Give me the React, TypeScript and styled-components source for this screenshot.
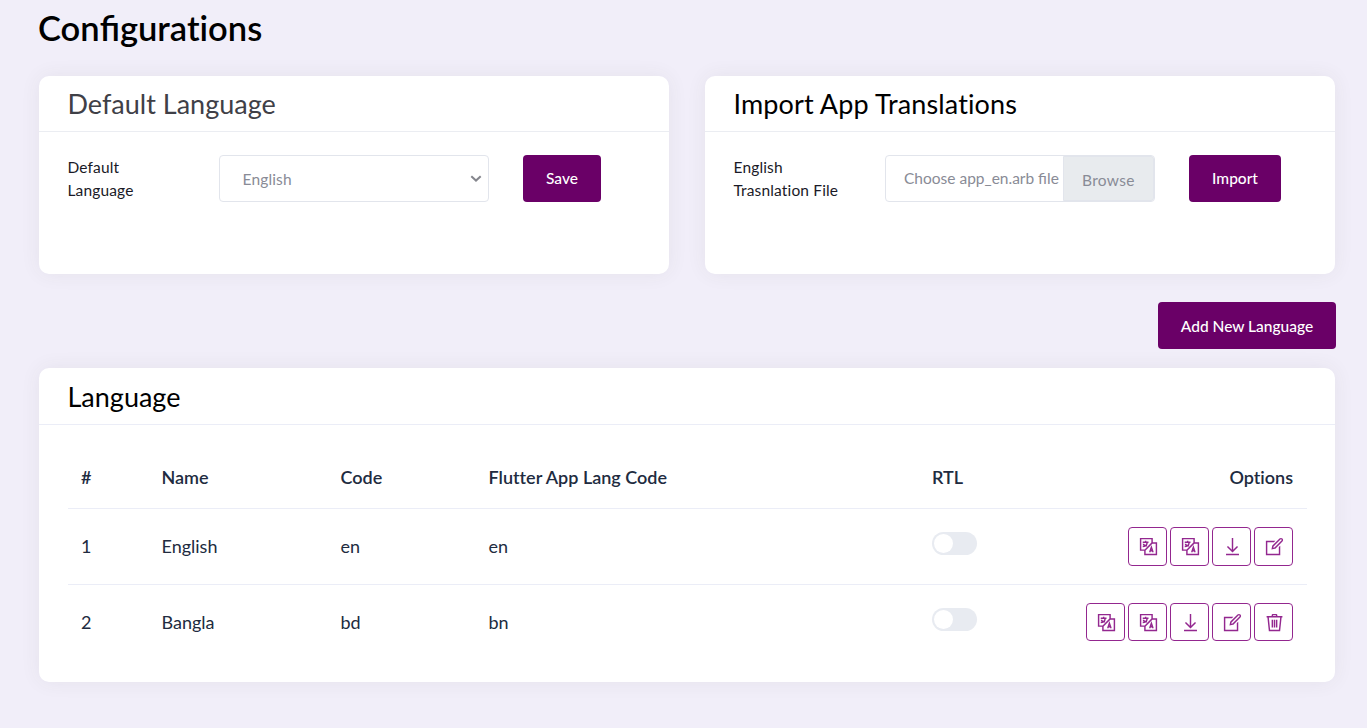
import React from 'react';
import styled, { createGlobalStyle } from 'styled-components';
import { LiaDownloadSolid, LiaEdit, LiaLanguageSolid, LiaTrashSolid } from 'react-icons/lia';

const GlobalStyle = createGlobalStyle`
  *, *::before, *::after { box-sizing: border-box; }
  body {
    margin: 0;
    background: #f1eef9;
    font-family: Lato, "Open Sans", sans-serif;
    font-size: 15.5px;
    color: #1e1e2d;
    font-variant-ligatures: none;
  }
`;

const Page = styled.main`
  height: 728px;
  padding: 0 32px 0 39px;
  overflow: hidden;
`;

const Title = styled.h1`
  margin: 0 0 0 -1px;
  padding-top: 7px;
  height: 76px;
  font-size: 34.5px;
  line-height: 42px;
  font-weight: 600;
  color: #000;
`;

const Joined = styled.span`
  font-variant-ligatures: common-ligatures;
`;

const Cards = styled.div`
  display: grid;
  grid-template-columns: 630px 630px;
  gap: 36px;
`;

const Card = styled.section<{ $height: number }>`
  width: 1296px;
  max-width: 100%;
  height: ${(p) => p.$height}px;
  background: #fff;
  border-radius: 10px;
  box-shadow: 0 0 20px rgba(76, 65, 60, 0.07);
`;

const CardHeader = styled.header<{ $height?: number; $tint?: string }>`
  height: ${(p) => p.$height ?? 56}px;
  padding: 1px 28.5px 0;
  display: flex;
  align-items: center;
  border-bottom: 1px solid ${(p) => p.$tint ?? '#ebedf2'};
`;

const CardTitle = styled.h2<{ $muted?: boolean; $tracking?: number }>`
  margin: 0;
  font-size: 27px;
  line-height: 36px;
  font-weight: 400;
  letter-spacing: ${(p) => p.$tracking ?? 0}px;
  color: ${(p) => (p.$muted ? '#3f4047' : '#000')};
`;

const FormRow = styled.form`
  display: flex;
  align-items: flex-start;
  padding: 23px 28.5px 0;
`;

const Label = styled.label`
  width: 151.5px;
  padding: 1px 36px 0 0;
  line-height: 23px;
  letter-spacing: 0.15px;
  color: #1a1a27;
`;

const Field = styled.div`
  width: 270px;
  height: 47px;
  margin-right: 34px;
  display: flex;
  border: 1px solid #e2e5ec;
  border-radius: 4px;
  color: #898b96;
  line-height: 45px;
  white-space: nowrap;
`;

const SelectValue = styled.span`
  flex: 1;
  padding-left: 22.5px;
  padding-top: 1px;
  letter-spacing: 0.15px;
`;

const Chevron = styled.svg`
  margin: 19px 6px 0 0;
`;

const FileName = styled.span`
  flex: 1;
  padding-left: 18px;
`;

const Browse = styled.span`
  width: 91px;
  padding: 1px 0 0 18px;
  line-height: 45px;
  letter-spacing: 0.3px;
  background: #e8ebee;
  border: 1px solid #e2e5ec;
  border-radius: 0 3px 3px 0;
`;

const Button = styled.button<{ $width: number; $drop?: number }>`
  width: ${(p) => p.$width}px;
  height: 47px;
  padding: ${(p) => p.$drop ?? 0}px 0 0;
  border: 0;
  border-radius: 4px;
  background: #6a0067;
  color: #fff;
  font: 500 15.5px/45px Lato, "Open Sans", sans-serif;
`;

const Actions = styled.div`
  display: flex;
  justify-content: flex-end;
  padding: 28px 0 19px;
  margin-right: -1px;
`;

const TableWrap = styled.div`
  padding: 21px 28px 0 29px;
`;

const Table = styled.table`
  width: 1239px;
  table-layout: fixed;
  border-collapse: separate;
  border-spacing: 0;
  font-size: 18px;
  color: #212b40;
`;

const Th = styled.th<{ $right?: boolean }>`
  height: 63px;
  padding: 0 14px 1px 13px;
  font-weight: 600;
  text-align: ${(p) => (p.$right ? 'right' : 'left')};
  border-bottom: 1px solid #ebedf7;
`;

const Td = styled.td<{ $last?: boolean }>`
  height: ${(p) => (p.$last ? 74 : 76)}px;
  padding: ${(p) => (p.$last ? '0 14px 0 13px' : '0 14px 1px 13px')};
  border-bottom: ${(p) => (p.$last ? '0' : '1px solid #ebedf7')};
`;

const Switch = styled.span`
  display: block;
  width: 45px;
  height: 23px;
  margin-top: -6px;
  padding: 2px;
  border-radius: 12px;
  background: #e8ebf1;
  &::before {
    content: '';
    display: block;
    width: 19px;
    height: 19px;
    border-radius: 50%;
    background: #fff;
  }
`;

const Options = styled.div`
  display: flex;
  justify-content: flex-end;
  gap: 3px;
`;

const IconButton = styled.button<{ $height: number }>`
  width: 39px;
  height: ${(p) => p.$height}px;
  padding: 0 0 0 2px;
  display: flex;
  align-items: center;
  justify-content: center;
  border: 1px solid #93278f;
  border-radius: 4px;
  background: #fff;
  color: #93278f;
  font-size: 23px;
`;

const rows = [
  { id: 1, name: 'English', code: 'en', flutter: 'en', removable: false },
  { id: 2, name: 'Bangla', code: 'bd', flutter: 'bn', removable: true },
];

const columns = [80.5, 179, 148, 443.5, 150, 238];

export default function App() {
  return (
    <>
      <GlobalStyle />
      <Page>
        <Title>Con<Joined>fi</Joined>gurations</Title>
        <Cards>
          <Card $height={198}>
            <CardHeader><CardTitle $muted>Default Language</CardTitle></CardHeader>
            <FormRow>
              <Label>Default Language</Label>
              <Field>
                <SelectValue>English</SelectValue>
                <Chevron width="12" height="8" viewBox="0 0 12 8" fill="none" stroke="#85868d" strokeWidth="2">
                  <path d="M1.3 1.2 6 5.6l4.7-4.4" />
                </Chevron>
              </Field>
              <Button type="button" $width={78}>Save</Button>
            </FormRow>
          </Card>
          <Card $height={198}>
            <CardHeader><CardTitle $tracking={0.12}>Import App Translations</CardTitle></CardHeader>
            <FormRow>
              <Label>English Trasnlation File</Label>
              <Field>
                <FileName><Joined>Choose app_en.arb file</Joined></FileName>
                <Browse>Browse</Browse>
              </Field>
              <Button type="button" $width={92}>Import</Button>
            </FormRow>
          </Card>
        </Cards>
        <Actions>
          <Button type="button" $width={178} $drop={2}>Add New Language</Button>
        </Actions>
        <Card $height={314}>
          <CardHeader $height={57} $tint="#ebedf7"><CardTitle>Language</CardTitle></CardHeader>
          <TableWrap>
            <Table>
              <colgroup>{columns.map((w, i) => <col key={i} style={{ width: w }} />)}</colgroup>
              <thead>
                <tr>
                  <Th>#</Th>
                  <Th>Name</Th>
                  <Th>Code</Th>
                  <Th>Flutter App Lang Code</Th>
                  <Th>RTL</Th>
                  <Th $right>Options</Th>
                </tr>
              </thead>
              <tbody>
                {rows.map((r, i) => {
                  const last = i === rows.length - 1;
                  const height = last ? 38 : 39;
                  return (
                    <tr key={r.id}>
                      <Td $last={last}>{r.id}</Td>
                      <Td $last={last}>{r.name}</Td>
                      <Td $last={last}>{r.code}</Td>
                      <Td $last={last}>{r.flutter}</Td>
                      <Td $last={last}><Switch /></Td>
                      <Td $last={last}>
                        <Options>
                          <IconButton $height={height}><LiaLanguageSolid /></IconButton>
                          <IconButton $height={height}><LiaLanguageSolid /></IconButton>
                          <IconButton $height={height}><LiaDownloadSolid /></IconButton>
                          <IconButton $height={height}><LiaEdit /></IconButton>
                          {r.removable && <IconButton $height={height}><LiaTrashSolid /></IconButton>}
                        </Options>
                      </Td>
                    </tr>
                  );
                })}
              </tbody>
            </Table>
          </TableWrap>
        </Card>
      </Page>
    </>
  );
}
